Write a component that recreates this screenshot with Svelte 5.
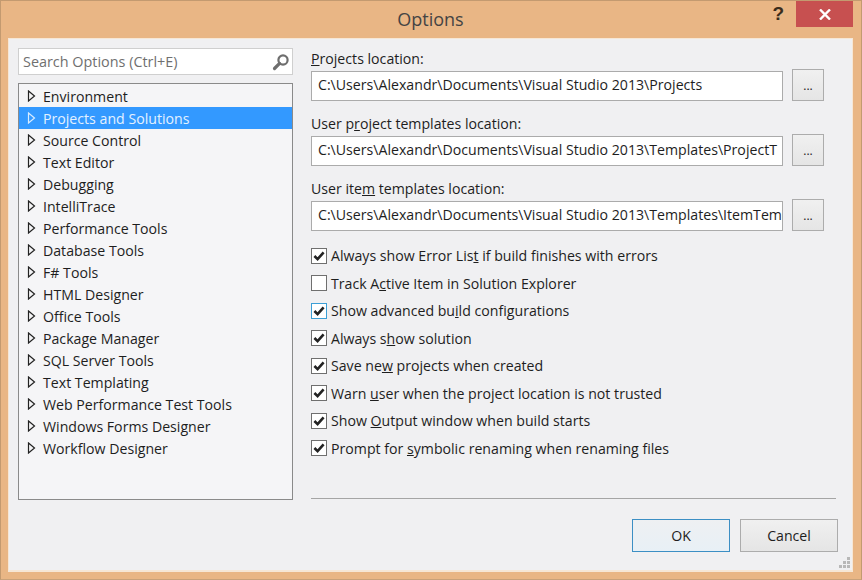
<script>
  const tree = ["Environment","Projects and Solutions","Source Control","Text Editor","Debugging","IntelliTrace","Performance Tools","Database Tools","F# Tools","HTML Designer","Office Tools","Package Manager","SQL Server Tools","Text Templating","Web Performance Test Tools","Windows Forms Designer","Workflow Designer"];
  const fields = [
    { pre: "", u: "P", post: "rojects location:", value: "C:\\Users\\Alexandr\\Documents\\Visual Studio 2013\\Projects" },
    { pre: "User p", u: "r", post: "oject templates location:", value: "C:\\Users\\Alexandr\\Documents\\Visual Studio 2013\\Templates\\ProjectT" },
    { pre: "User ite", u: "m", post: " templates location:", value: "C:\\Users\\Alexandr\\Documents\\Visual Studio 2013\\Templates\\ItemTem" }
  ];
  const checks = [
    { pre: "Always show Error Lis", u: "t", post: " if build finishes with errors", on: true },
    { pre: "Track A", u: "c", post: "tive Item in Solution Explorer", on: false },
    { pre: "Show advanced bu", u: "i", post: "ld configurations", on: true, focus: true },
    { pre: "Always s", u: "h", post: "ow solution", on: true },
    { pre: "Save ne", u: "w", post: " projects when created", on: true },
    { pre: "Warn ", u: "u", post: "ser when the project location is not trusted", on: true },
    { pre: "Show ", u: "O", post: "utput window when build starts", on: true },
    { pre: "Prompt for ", u: "s", post: "ymbolic renaming when renaming files", on: true }
  ];
</script>

<div class="window">
  <header class="titlebar">
    <span></span>
    <h1>Options</h1>
    <div class="controls">
      <span class="help">?</span>
      <span class="close">
        <svg width="12" height="11" viewBox="0 0 12 11"><path d="M1 0.5 L11 10.5 M11 0.5 L1 10.5" stroke="#fff" stroke-width="2.4" fill="none"/></svg>
      </span>
    </div>
  </header>

  <main class="client">
    <div class="columns">
      <section class="left">
        <div class="search">
          <span>Search Options (Ctrl+E)</span>
          <svg width="18" height="18" viewBox="0 0 18 18"><circle cx="11" cy="7" r="4.6" fill="none" stroke="#6e6e6e" stroke-width="2.2"/><path d="M7.6 10.4 L2.5 15.5" stroke="#6e6e6e" stroke-width="3.2" stroke-linecap="round"/></svg>
        </div>
        <ul class="tree">
          {#each tree as item, i}
            <li class:selected={i === 1}>
              <svg width="9" height="12" viewBox="0 0 9 12"><path d="M1.5 1 L7.5 6 L1.5 11 Z" fill="none" stroke={i === 1 ? "#d8ecff" : "#222"} stroke-width="1.2"/></svg>
              <span>{item}</span>
            </li>
          {/each}
        </ul>
      </section>

      <section class="right">
        {#each fields as f}
          <div class="field">
            <label>{f.pre}<u>{f.u}</u>{f.post}</label>
            <div class="inputrow">
              <div class="input"><span>{f.value}</span></div>
              <button class="browse">...</button>
            </div>
          </div>
        {/each}
        <div class="checks">
          {#each checks as c}
            <div class="check">
              <span class="box" class:focus={c.focus}>
                {#if c.on}
                  <svg width="14" height="14" viewBox="0 0 14 14"><path d="M2.4 7 L5.6 10.2 L11.6 3.4" fill="none" stroke="#222" stroke-width="2.6"/></svg>
                {/if}
              </span>
              <span>{c.pre}<u>{c.u}</u>{c.post}</span>
            </div>
          {/each}
        </div>
      </section>
    </div>

    <footer class="footer">
      <div class="rule"></div>
      <div class="buttons">
        <button class="btn ok">OK</button>
        <button class="btn">Cancel</button>
      </div>
      <svg class="grip" width="13" height="13" viewBox="0 0 13 13" fill="#b8b8b8">
        <rect x="9" y="1" width="3" height="3"/><rect x="5" y="5" width="3" height="3"/><rect x="9" y="5" width="3" height="3"/><rect x="1" y="9" width="3" height="3"/><rect x="5" y="9" width="3" height="3"/><rect x="9" y="9" width="3" height="3"/>
      </svg>
    </footer>
  </main>
</div>

<style>
  :global(body) { margin: 0; background: #e9b685; }
  .window {
    width: 862px; height: 580px; box-sizing: border-box;
    background: #e9b685; border: 1px solid #c39a70; border-bottom-color: #c9a27a;
    padding: 0 8px 7px 7px;
    display: flex; flex-direction: column;
    font-family: "Open Sans", "Noto Sans", sans-serif;
    font-size: 14.15px; color: #1e1e1e;
  }
  .titlebar { height: 37px; flex: none; display: grid; grid-template-columns: 1fr auto 1fr; }
  h1 { margin: 0; font-weight: 400; font-size: 18px; line-height: 37px; color: #444; }
  .controls { display: flex; justify-content: flex-end; align-items: flex-start; }
  .help { font: 700 19px/26px "Liberation Sans", sans-serif; color: #3a2c1c; margin-right: 12px; }
  .close { width: 57px; height: 26px; background: #c75050; display: flex; align-items: center; justify-content: center; }
  .client {
    flex: 1; min-height: 0; background: #f0f0f2; border: 1px solid #f6e7d6; border-width: 1px 1px 2px 1px;
    display: flex; flex-direction: column; padding: 9px 0 0 9px; position: relative;
  }
  .columns { display: flex; gap: 18px; }
  .left { width: 275px; flex: none; display: flex; flex-direction: column; gap: 8px; }
  .search {
    height: 27px; box-sizing: border-box; border: 1px solid #cfcfcf; background: #fff;
    display: flex; align-items: center; justify-content: space-between; padding: 0 2px 0 4px; color: #6f6f6f;
    font-size: 14.4px;
  }
  .tree {
    margin: 0; padding: 1px 0 0; list-style: none; height: 417px; box-sizing: border-box;
    border: 1px solid #8a8a8a; background: #f5f5f7;
  }
  .tree li { height: 22px; display: flex; align-items: center; padding-left: 8px; gap: 7px; }
  .tree li.selected { background: #3399ff; color: #e3f1ff; }
  .right { width: 527px; flex: none; padding-top: 1px; display: flex; flex-direction: column; }
  .field { height: 65px; display: flex; flex-direction: column; }
  .field label { line-height: 20px; height: 21px; }
  .inputrow { display: flex; gap: 9px; align-items: flex-start; height: 32px; margin-top: -1px; }
  .input {
    width: 472px; height: 30px; box-sizing: border-box; border: 1px solid #ababab; background: #fff;
    margin-top: 2px; padding: 0 0 3px 6px; display: flex; align-items: center; overflow: hidden; white-space: nowrap;
  }
  .browse {
    width: 32px; height: 32px; border: 1px solid #acacac; background: linear-gradient(#f0f0f0, #e5e5e5);
    font: inherit; font-size: 12px; padding: 0; color: #222;
  }
  .checks { margin-top: -2px; display: flex; flex-direction: column; }
  .check { height: 27.5px; display: flex; align-items: center; gap: 4px; }
  .box {
    width: 16px; height: 16px; box-sizing: border-box; border: 1px solid #6f6f6f; background: #fff;
    display: flex; align-items: center; justify-content: center;
  }
  .box.focus { border-color: #3c9fd6; }
  .footer { flex: 1; position: relative; padding-left: 293px; }
  .rule { height: 1px; background: #a5a5a5; width: 525px; margin-top: -2px; }
  .buttons { display: flex; gap: 10px; margin: 20px 0 0 321px; }
  .btn {
    width: 98px; height: 33px; border: 1px solid #acacac; background: linear-gradient(#f0f0f0, #e5e5e5);
    font: inherit; color: #1e1e1e; padding: 0;
  }
  .btn.ok { border-color: #3c8fc4; background: linear-gradient(#eef0f2, #e8f0f6); }
  .grip { position: absolute; right: 1px; bottom: 1px; }
</style>
